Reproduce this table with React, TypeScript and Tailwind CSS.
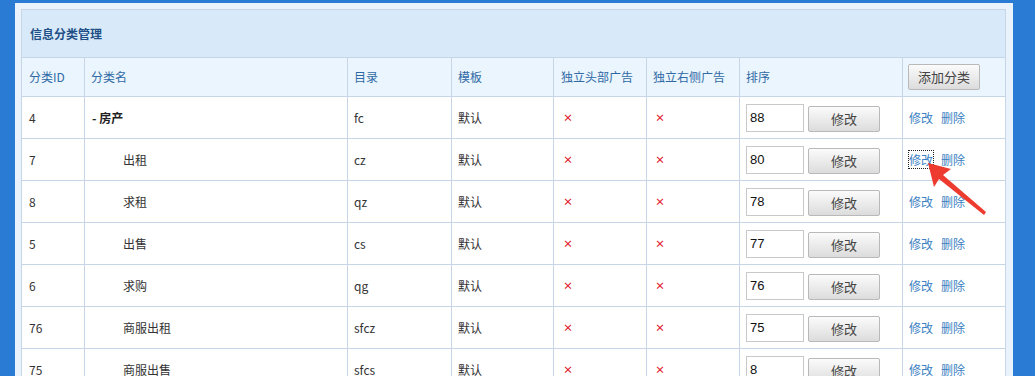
import React from "react";

const rows = [
  { id: "4", name: "- 房产", top: true, dir: "fc", sort: "88" },
  { id: "7", name: "出租", dir: "cz", sort: "80" },
  { id: "8", name: "求租", dir: "qz", sort: "78" },
  { id: "5", name: "出售", dir: "cs", sort: "77" },
  { id: "6", name: "求购", dir: "qg", sort: "76" },
  { id: "76", name: "商服出租", dir: "sfcz", sort: "75" },
  { id: "75", name: "商服出售", dir: "sfcs", sort: "8" },
];

const widths = [63, 263, 104, 102, 93, 93, 163, 103];

function Btn({ children, className = "" }: { children: React.ReactNode; className?: string }) {
  return (
    <button
      className={
        "h-[26px] w-[72px] rounded-[2px] border border-[#b9b9b9] bg-gradient-to-b from-[#fbfbfb] to-[#dcdcdc] text-[13px] text-[#444] " +
        className
      }
    >
      {children}
    </button>
  );
}

export default function App() {
  const font = { fontFamily: '"Noto Sans CJK SC", "Liberation Sans", sans-serif' };
  return (
    <div className="relative h-[376px] w-[1035px] overflow-hidden bg-[#2a7bd3] pl-[15px] pt-[3px]" style={font}>
      <div className="h-[400px] w-[998px] bg-[#eaf3fc] pl-[6px] pr-[8px] pt-[6px]">
        <table className="w-[984px] table-fixed border-collapse text-[12px]">
          <colgroup>
            {widths.map((w, i) => (
              <col key={i} style={{ width: w }} />
            ))}
          </colgroup>
          <thead>
            <tr className="h-[48px] bg-[#d8eaf9]">
              <th colSpan={8} className="border border-[#c6d6e6] pl-[8px] text-left text-[12px] font-bold text-[#1f4f86]">
                信息分类管理
              </th>
            </tr>
            <tr className="h-[39px] bg-[#ebf5fd] text-[#2f6aa6]">
              <th className="border border-[#c6d6e6] pl-[7px] text-left font-normal">分类ID</th>
              <th className="border border-[#c6d6e6] pl-[6px] text-left font-normal">分类名</th>
              <th className="border border-[#c6d6e6] pl-[6px] text-left font-normal">目录</th>
              <th className="border border-[#c6d6e6] pl-[6px] text-left font-normal">模板</th>
              <th className="border border-[#c6d6e6] pl-[7px] text-left font-normal">独立头部广告</th>
              <th className="border border-[#c6d6e6] pl-[6px] text-left font-normal">独立右侧广告</th>
              <th className="border border-[#c6d6e6] pl-[6px] text-left font-normal">排序</th>
              <th className="border border-[#c6d6e6] pl-[5px] text-left font-normal">
                <Btn className="block">添加分类</Btn>
              </th>
            </tr>
          </thead>
          <tbody>
            {rows.map((r, i) => (
              <tr key={r.id} className="h-[42px] bg-white text-[#333]">
                <td className="border border-[#c6d6e6] pl-[7px]">{r.id}</td>
                <td className={"border border-[#c6d6e6] " + (r.top ? "pl-[7px] font-bold text-[#222]" : "pl-[38px]")}>
                  {r.name}
                </td>
                <td className="border border-[#c6d6e6] pl-[6px]">{r.dir}</td>
                <td className="border border-[#c6d6e6] pl-[6px]">默认</td>
                <td className="border border-[#c6d6e6] pl-[9px] text-[10px] font-bold text-[#e0202c]">×</td>
                <td className="border border-[#c6d6e6] pl-[8px] text-[10px] font-bold text-[#e0202c]">×</td>
                <td className="border border-[#c6d6e6] pl-[6px]">
                  <div className="flex items-center gap-[4px]">
                    <div className="flex h-[28px] w-[58px] items-center border border-[#c9c9c9] bg-white pl-[3px] text-[13px] text-[#111]" style={{ fontFamily: '"Liberation Sans", sans-serif' }}>
                      {r.sort}
                    </div>
                    <Btn className="mt-[2px]">修改</Btn>
                  </div>
                </td>
                <td className="border border-[#c6d6e6] pl-[6px] text-[#3c7fc2]">
                  <span className={i === 1 ? "outline-1 outline-dotted outline-[#222]" : ""}>修改</span>
                  <span className="ml-[8px]">删除</span>
                </td>
              </tr>
            ))}
          </tbody>
        </table>
      </div>
      <svg className="absolute left-0 top-0" width="1035" height="376" viewBox="0 0 1035 376">
        <polygon points="928,163 951,169 943,175 986,212 984,215 939,179 934,187" fill="#ee3b2f" />
      </svg>
    </div>
  );
}
